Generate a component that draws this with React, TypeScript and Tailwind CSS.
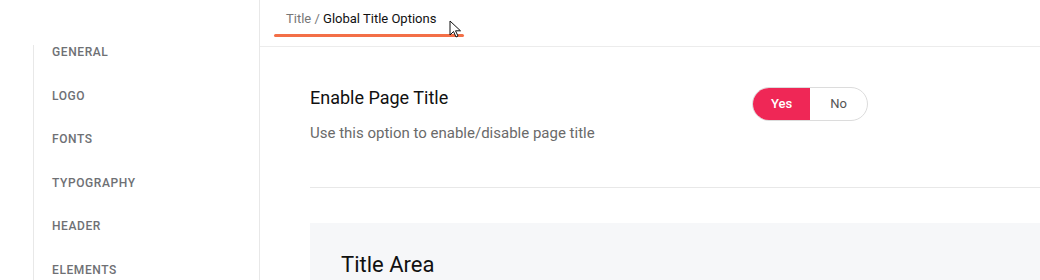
const navItems = ["General", "Logo", "Fonts", "Typography", "Header", "Elements"];

function Cursor() {
  return (
    <svg
      className="absolute left-[449px] top-[20px]"
      width="14"
      height="20"
      viewBox="0 0 14 20"
      fill="none"
    >
      <path d="M1 1 L1 15 L4.5 11.5 L7 17 L9 16 L6.5 10.8 L11.5 10.8 Z" fill="#fff" stroke="#111" strokeWidth="1" strokeLinejoin="round" />
    </svg>
  );
}

export default function App() {
  return (
    <div className="relative flex h-[280px] w-[1040px] overflow-hidden bg-white font-['Roboto',sans-serif]">
      <aside className="w-[260px] shrink-0 border-r border-[#e8e8e8] pl-[33px]">
        <ul className="mt-[45px] flex h-full flex-col gap-[29.6px] border-l border-[#e8e8e8] pl-[18px]">
          {navItems.map((item) => (
            <li key={item} className="text-[12px] font-medium uppercase leading-[14px] tracking-[0.05em] text-[#6e7074]">
              {item}
            </li>
          ))}
        </ul>
      </aside>

      <main className="flex-1">
        <header className="h-[47px] border-b border-[#ececec] pl-[14px] pt-[10px]">
          <div className="pl-[12px] text-[13px] leading-[17px]">
            <span className="text-[#777]">Title / </span>
            <span className="text-[#111]">Global Title Options</span>
          </div>
          <div className="mt-[7px] h-[3px] w-[190px] rounded-full bg-[#f36f47]" />
        </header>

        <section className="pl-[50px] pt-[40px]">
          <div className="flex items-start">
            <div className="w-[442px]">
              <h3 className="text-[18px] leading-[22px] text-[#111]">Enable Page Title</h3>
              <p className="mt-[15px] text-[15px] leading-[18px] text-[#6a6a6a]">
                Use this option to enable/disable page title
              </p>
            </div>
            <div className="flex h-[34px] w-[116px] overflow-hidden rounded-full border border-[#dcdcdc] text-[13px]">
              <span className="flex w-[57px] items-center justify-center bg-[#ef2756] font-medium text-white">Yes</span>
              <span className="flex flex-1 items-center justify-center text-[#555]">No</span>
            </div>
          </div>

          <div className="mt-[45px] border-t border-[#e8e8e8]" />

          <div className="mt-[35px] h-[80px] bg-[#f6f7f9] pl-[31px] pt-[29px]">
            <h2 className="text-[22px] leading-[26px] text-[#111]">Title Area</h2>
          </div>
        </section>
      </main>

      <Cursor />
    </div>
  );
}
